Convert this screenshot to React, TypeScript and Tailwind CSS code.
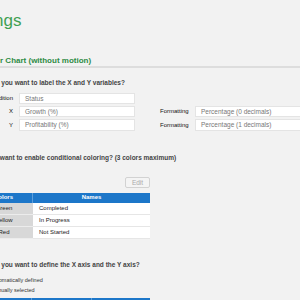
const colors = [
  { color: 'Green', name: 'Completed' },
  { color: 'Yellow', name: 'In Progress' },
  { color: 'Red', name: 'Not Started' },
];

function Field({ value, className }: { value: string; className: string }) {
  return (
    <div
      className={`h-[11.5px] bg-white border border-[#e4e4e4] pl-[5px] flex items-center text-[6.5px] text-[#777] ${className}`}
    >
      {value}
    </div>
  );
}

function Radio({ label, checked }: { label: string; checked?: boolean }) {
  return (
    <label className="flex items-center h-[10px] pl-[4px] gap-[3.5px] text-[5.5px] leading-[10px] text-[#333]">
      <span className="w-[7px] h-[7px] rounded-full border border-[#999] bg-white flex items-center justify-center">
        {checked && <span className="w-[3px] h-[3px] rounded-full bg-[#333]" />}
      </span>
      {label}
    </label>
  );
}

export default function App() {
  return (
    <div className="w-[300px] h-[300px] overflow-hidden bg-[#f2f2f2] font-['Liberation_Sans',Arial,sans-serif]">
      <div className="-ml-[40px] w-[400px]">
        <h1 className="pt-[11px] text-[17px] leading-[20px] text-[#3fa052]">Settings</h1>
        <h2 className="mt-[25px] pl-[16px] text-[8px] leading-[10px] font-bold text-[#2e8b45]">
          Scatter Chart (without motion)
        </h2>
        <div className="h-[2px] bg-[#dddddd]" />

        <div className="pl-[16px]">
          {/* Labels */}
          <p className="mt-[11px] text-[6.5px] leading-[8px] font-bold text-[#444]">
            How do you want to label the X and Y variables?
          </p>
          <div className="mt-[5.7px] flex flex-col gap-[1.8px]">
            <div className="flex items-center">
              <span className="w-[37px] text-right text-[6px] text-[#111]">Condition</span>
              <Field value="Status" className="ml-[6px] w-[116px]" />
            </div>
            <div className="flex items-center">
              <span className="w-[37px] text-right text-[6px] text-[#111]">X</span>
              <Field value="Growth (%)" className="ml-[6px] w-[116px]" />
              <span className="ml-[25px] w-[35px] text-[6px] text-[#111]">Formatting</span>
              <Field value="Percentage (0 decimals)" className="w-[140px]" />
            </div>
            <div className="flex items-center">
              <span className="w-[37px] text-right text-[6px] text-[#111]">Y</span>
              <Field value="Profitability (%)" className="ml-[6px] w-[116px]" />
              <span className="ml-[25px] w-[35px] text-[6px] text-[#111]">Formatting</span>
              <Field value="Percentage (1 decimals)" className="w-[140px]" />
            </div>
          </div>

          {/* Conditional coloring */}
          <p className="mt-[22.8px] text-[6.5px] leading-[8px] font-bold text-[#444]">
            Do you want to enable conditional coloring? (3 colors maximum)
          </p>
          <div className="mt-[15.1px] -ml-[1px] w-[175px] flex justify-end">
            <button
              disabled
              className="w-[25px] h-[11.6px] rounded-[2px] border border-[#d2d2d2] bg-[#f4f4f4] text-[6.5px] text-[#aaa]"
            >
              Edit
            </button>
          </div>
          <div className="mt-[4.4px] -ml-[1px] w-[175px]">
            <div className="flex h-[10.6px] bg-[#1d77c9] text-white text-[6px] font-bold">
              <div className="w-[58px] flex items-center justify-center border-r border-[#5c9edb]">Colors</div>
              <div className="flex-1 flex items-center justify-center">Names</div>
            </div>
            {colors.map((c) => (
              <div key={c.color} className="flex h-[12px] text-[6px] text-[#222]">
                <div className="w-[58px] flex items-center justify-center bg-[#d8d8d8] border-b border-[#ececec]">
                  {c.color}
                </div>
                <div className="flex-1 flex items-center pl-[6px] bg-white border-b border-[#e6e6e6]">
                  {c.name}
                </div>
              </div>
            ))}
          </div>

          {/* Axis */}
          <p className="mt-[21.5px] text-[6.5px] leading-[8px] font-bold text-[#444]">
            How do you want to define the X axis and the Y axis?
          </p>
          <div className="mt-[5.9px] flex flex-col">
            <Radio label="Automatically defined" />
            <Radio label="Manually selected" checked />
          </div>
          <div className="mt-[3.6px] -ml-[1px] w-[175px] flex h-[11px] bg-[#1d77c9] text-white text-[6px] font-bold">
            <div className="w-[57px] border-r border-[#5c9edb]" />
            <div className="w-[60px] border-r border-[#5c9edb]" />
            <div className="flex-1" />
          </div>
        </div>
      </div>
    </div>
  );
}
